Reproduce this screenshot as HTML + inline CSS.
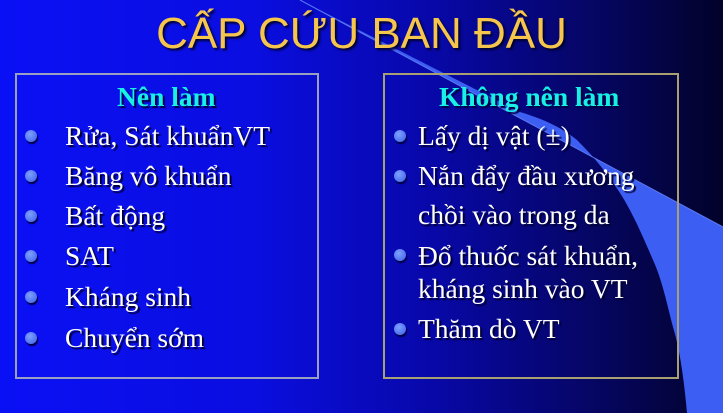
<!DOCTYPE html>
<html><head><meta charset="utf-8"><style>
body{margin:0;width:723px;height:413px;overflow:hidden;position:relative;background:linear-gradient(90deg,#0a10f5 0%,#0a0ee0 35%,#0808a8 60%,#05055a 85%,#02022a 100%);font-family:"Liberation Serif",serif}
svg.bg{position:absolute;left:0;top:0}
h1{position:absolute;left:0;width:723px;top:9px;margin:0;text-align:center;font:400 44px "Liberation Sans",sans-serif;color:#f6c64c;text-shadow:2px 2px 2px #000030}
.box{position:absolute;top:73px;height:306px;box-sizing:border-box}
.h{position:absolute;font-weight:bold;font-size:27.5px;color:#18f0e6;text-shadow:2px 2px 1px #000040;transform:translateY(-50%)}
.i{position:absolute;font-size:27.5px;color:#fff;text-shadow:2px 2px 1px #000030;transform:translateY(-50%);white-space:nowrap}
.b{position:absolute;width:12px;height:12px;border-radius:50%;background:radial-gradient(circle at 40% 35%,#7fa0ff,#3a5ee8);box-shadow:1px 2px 1px #000040;transform:translate(-50%,-50%)}
</style></head><body>
<svg class="bg" width="723" height="413"><path d="M300 0 L723 227 L723 413 L687 413 C684 380 680 350 673 327 C666 300 662 280 653 260 C640 230 632 212 620 193 C605 170 592 155 577 140 C560 126 540 118 520 112 Z" fill="#3d5ef2"/><path d="M300 0 L723 227" stroke="#5a78f0" stroke-width="1"/></svg>
<h1>CẤP CỨU BAN ĐẦU</h1>
<div class="box" style="left:15px;width:304px;border:2px solid #9aa0c0"></div>
<div class="box" style="left:383px;width:296px;border:2px solid #a8a070"></div>
<div class="h" style="left:117px;top:97px">Nên làm</div>
<div class="b" style="left:31px;top:136px"></div><div class="i" style="left:65px;top:136px">Rửa, Sát khuẩnVT</div>
<div class="b" style="left:31px;top:176px"></div><div class="i" style="left:65px;top:176px">Băng vô khuẩn</div>
<div class="b" style="left:31px;top:216px"></div><div class="i" style="left:65px;top:216px">Bất động</div>
<div class="b" style="left:31px;top:256px"></div><div class="i" style="left:65px;top:256px">SAT</div>
<div class="b" style="left:31px;top:297px"></div><div class="i" style="left:65px;top:297px">Kháng sinh</div>
<div class="b" style="left:31px;top:338px"></div><div class="i" style="left:65px;top:338px">Chuyển sớm</div>
<div class="h" style="left:439px;top:97px">Không nên làm</div>
<div class="b" style="left:400px;top:136px"></div><div class="i" style="left:418px;top:136px">Lấy dị vật (±)</div>
<div class="b" style="left:400px;top:176px"></div><div class="i" style="left:418px;top:176px">Nắn đẩy đầu xương</div>
<div class="i" style="left:418px;top:215px">chồi vào trong da</div>
<div class="b" style="left:400px;top:255px"></div><div class="i" style="left:418px;top:256px">Đổ thuốc sát khuẩn,</div>
<div class="i" style="left:418px;top:289px">kháng sinh vào VT</div>
<div class="b" style="left:400px;top:329px"></div><div class="i" style="left:418px;top:329px">Thăm dò VT</div>
</body></html>
